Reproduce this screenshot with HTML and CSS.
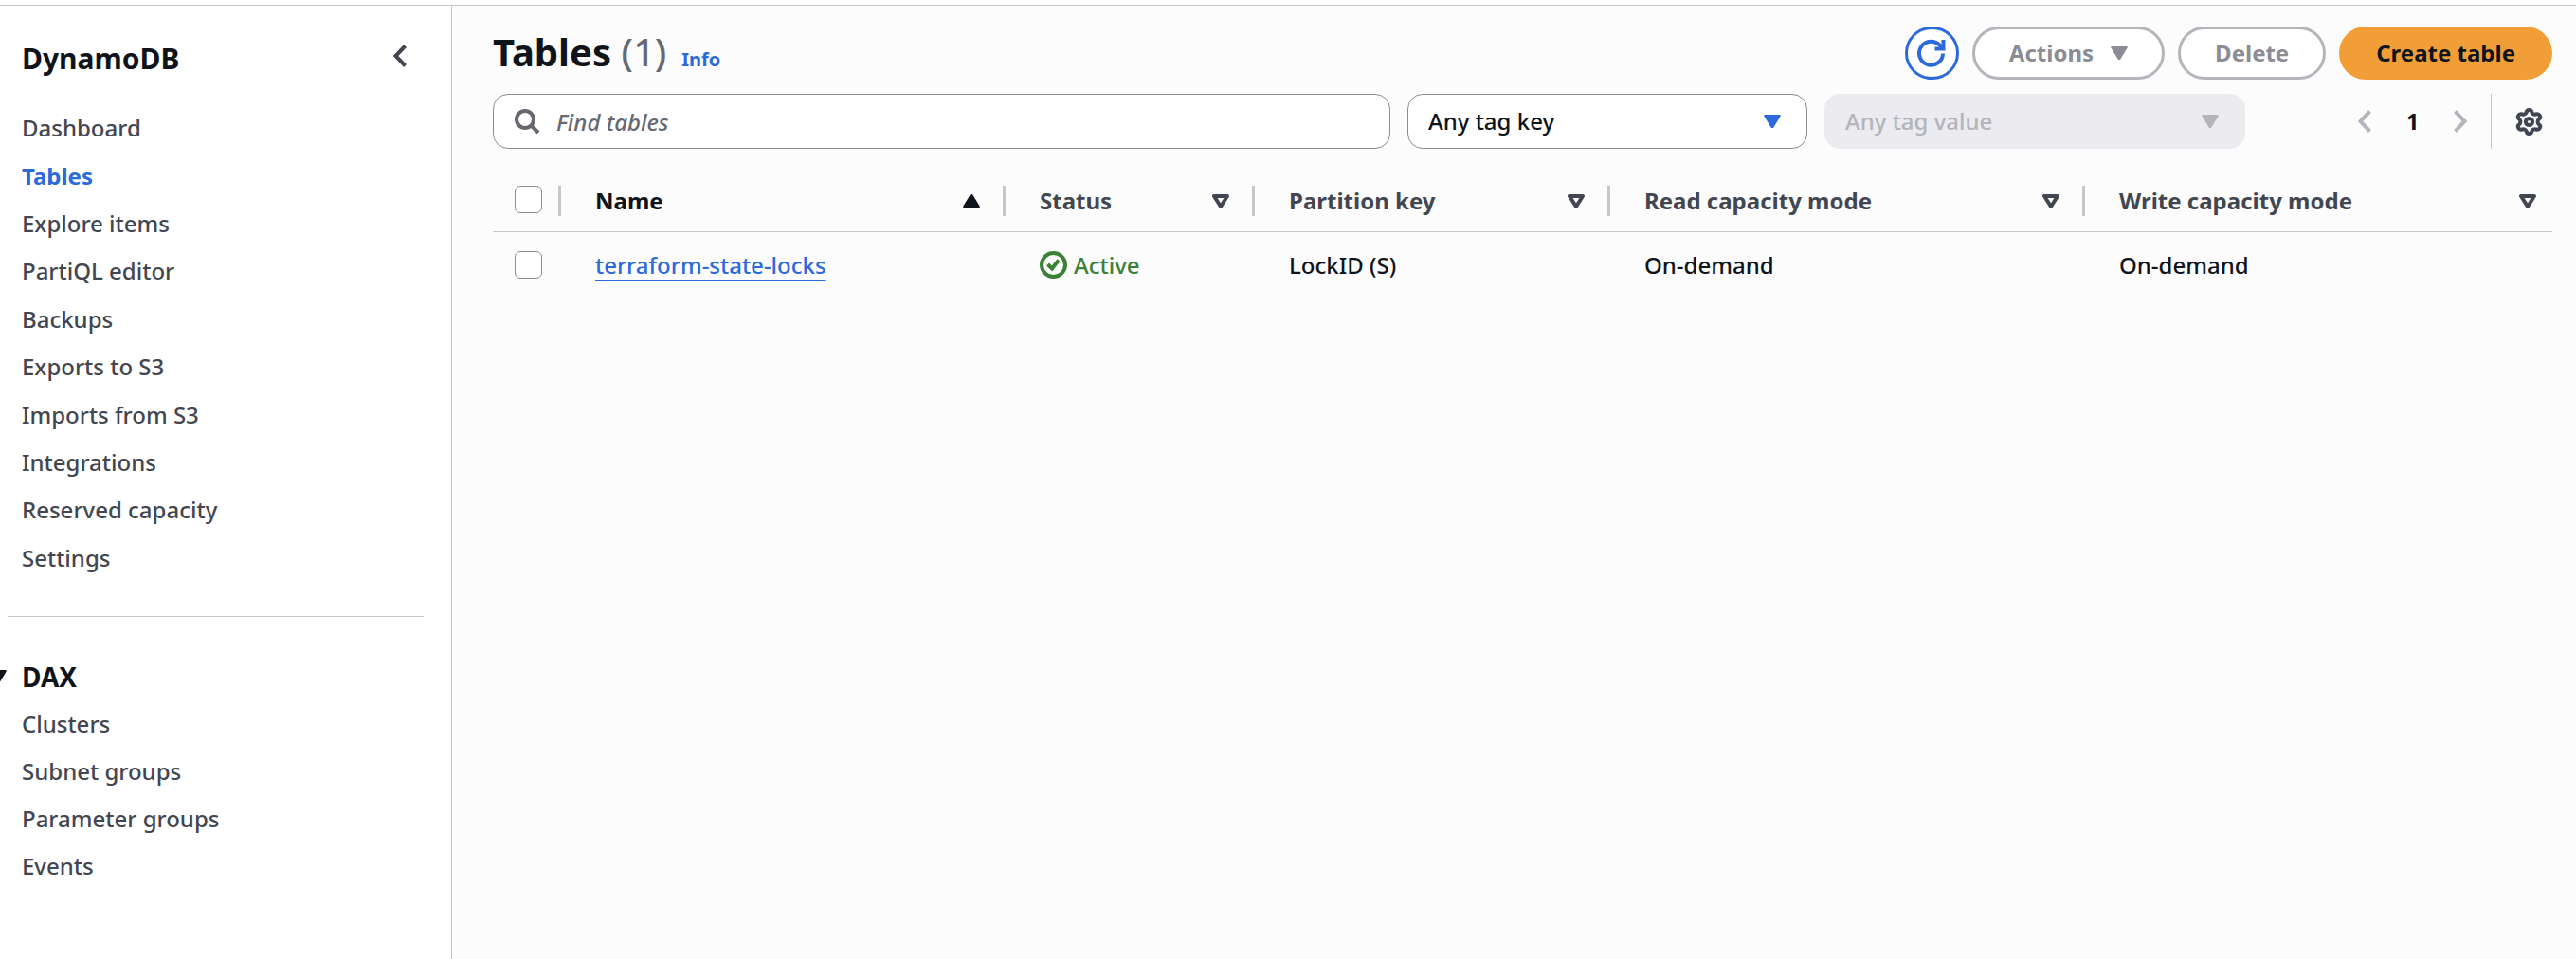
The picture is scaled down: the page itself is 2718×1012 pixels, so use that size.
FILE: index.html
```html
<!DOCTYPE html>
<html lang="en">
<head>
<meta charset="utf-8">
<title>Tables | DynamoDB</title>
<meta name="viewport" content="width=device-width, initial-scale=1">
<link rel="stylesheet" href="styles.css">
</head>
<body>
<div class="app">
  <aside class="sidebar">
    <header class="sidebar-header">
      <h2 class="service-name">DynamoDB</h2>
      <button class="icon-button" type="button" aria-label="Close navigation">
        <svg class="chevron" viewBox="0 0 14 24"><path d="M12.500 1.500 2.500 12l10 10.500"/></svg>
      </button>
    </header>
    <nav aria-label="DynamoDB">
      <ul class="nav-list nav-main">
        <li><a href="#">Dashboard</a></li>
        <li><a class="current" href="#" aria-current="page">Tables</a></li>
        <li><a href="#">Explore items</a></li>
        <li><a href="#">PartiQL editor</a></li>
        <li><a href="#">Backups</a></li>
        <li><a href="#">Exports to S3</a></li>
        <li><a href="#">Imports from S3</a></li>
        <li><a href="#">Integrations</a></li>
        <li><a href="#">Reserved capacity</a></li>
        <li><a href="#">Settings</a></li>
      </ul>
      <hr class="nav-divider">
      <button class="nav-section" type="button" aria-expanded="true">
        <svg class="triangle" viewBox="0 0 18 15"><path d="M1 0h16l1 1-8 13H8L0 1z"/></svg>
        <span>DAX</span>
      </button>
      <ul class="nav-list">
        <li><a href="#">Clusters</a></li>
        <li><a href="#">Subnet groups</a></li>
        <li><a href="#">Parameter groups</a></li>
        <li><a href="#">Events</a></li>
      </ul>
    </nav>
  </aside>

  <main class="content">
    <header class="page-header">
      <div class="page-title">
        <h1>Tables <span class="count">(1)</span></h1>
        <a class="info" href="#">Info</a>
      </div>
      <div class="actions">
        <button class="button refresh" type="button" aria-label="Refresh">
          <svg viewBox="0 0 30 30"><path d="M27 15.500a12.500 12.500 0 1 1-4.200-9.600L26.500 9.500"/><path d="M27.500 1v9.500H18.500"/></svg>
        </button>
        <button class="button" type="button" disabled>Actions
          <svg class="triangle" viewBox="0 0 18 15"><path d="M1 0h16l1 1-8 13H8L0 1z"/></svg>
        </button>
        <button class="button" type="button" disabled>Delete</button>
        <button class="button primary" type="button">Create table</button>
      </div>
    </header>

    <div class="toolbar">
      <div class="filters">
        <label class="field">
          <svg class="search-icon" viewBox="0 0 27 27"><circle cx="11" cy="11" r="9"/><path d="m17.500 17.500 7.500 7.500"/></svg>
          <input class="control search" type="search" placeholder="Find tables" aria-label="Find tables">
        </label>
        <label class="field">
          <select class="control" aria-label="Tag key"><option>Any tag key</option></select>
          <svg class="triangle select-arrow" viewBox="0 0 18 15"><path d="M1 0h16l1 1-8 13H8L0 1z"/></svg>
        </label>
        <label class="field">
          <select class="control" aria-label="Tag value" disabled><option>Any tag value</option></select>
          <svg class="triangle select-arrow" viewBox="0 0 18 15"><path d="M1 0h16l1 1-8 13H8L0 1z"/></svg>
        </label>
      </div>
      <div class="pagination">
        <button class="icon-button" type="button" aria-label="Previous page" disabled>
          <svg class="chevron" viewBox="0 0 14 24"><path d="M12.500 1.500 2.500 12l10 10.500"/></svg>
        </button>
        <button class="page-number" type="button" aria-current="page">1</button>
        <button class="icon-button" type="button" aria-label="Next page" disabled>
          <svg class="chevron" viewBox="0 0 14 24"><path d="m1.500 1.500 10 10.500-10 10.500"/></svg>
        </button>
      </div>
      <div class="preferences">
        <button class="icon-button" type="button" aria-label="Preferences">
          <svg class="gear" viewBox="0 0 28 29"><path d="M11 5Q11.300 2 14 2T17 5Q18.500 7.300 21 6.500 24 5.500 25.300 8T24 12Q22.300 14.500 24 17 26.600 18.500 25.300 21T21 22.500Q18.500 21.700 17 24 16.700 27 14 27T11 24Q9.500 21.700 7 22.500 4 23.500 2.700 21T4 17Q5.700 14.500 4 12 1.400 10.500 2.700 8T7 6.500Q9.500 7.300 11 5z"/><circle cx="14" cy="14.500" r="3.600"/></svg>
        </button>
      </div>
    </div>

    <table class="data">
      <colgroup>
        <col class="col-select"><col class="col-name"><col class="col-status"><col class="col-key"><col class="col-read"><col class="col-write">
      </colgroup>
      <thead>
        <tr>
          <th class="select-cell" scope="col"><div class="head"><input type="checkbox" aria-label="Select all tables"></div></th>
          <th class="sorted" scope="col" aria-sort="ascending"><div class="head">Name
            <svg class="triangle" viewBox="0 0 18 15"><path d="M8 0h2l8 13-1 2H1l-1-2z"/></svg></div></th>
          <th scope="col"><div class="head">Status
            <svg class="triangle outline" viewBox="0 0 18 15"><path d="M2 2h14L9 13z"/></svg></div></th>
          <th scope="col"><div class="head">Partition key
            <svg class="triangle outline" viewBox="0 0 18 15"><path d="M2 2h14L9 13z"/></svg></div></th>
          <th scope="col"><div class="head">Read capacity mode
            <svg class="triangle outline" viewBox="0 0 18 15"><path d="M2 2h14L9 13z"/></svg></div></th>
          <th scope="col"><div class="head">Write capacity mode
            <svg class="triangle outline" viewBox="0 0 18 15"><path d="M2 2h14L9 13z"/></svg></div></th>
        </tr>
      </thead>
      <tbody>
        <tr>
          <td class="select-cell"><input type="checkbox" aria-label="Select terraform-state-locks"></td>
          <td><a class="table-link" href="#">terraform-state-locks</a></td>
          <td><span class="status"><svg viewBox="0 0 29 29"><circle cx="14.500" cy="14.500" r="12.500"/><path d="m8.500 14 4.500 4.500L20 9.500"/></svg>Active</span></td>
          <td>LockID (S)</td>
          <td>On-demand</td>
          <td>On-demand</td>
        </tr>
      </tbody>
    </table>
  </main>
</div>
</body>
</html>
```
FILE: styles.css
```css
:root {
  --text: #0f141a;
  --text-secondary: #424650;
  --text-muted: #656871;
  --blue: #2b6adb;
  --orange: #f29e38;
  --green: #3a8035;
  --line: #c6c6cd;
  --input-border: #8c8c94;
  --disabled: #b4b4bb;
}

* { box-sizing: border-box; }

body {
  margin: 0;
  padding-top: 5px;
  background: #fff;
  color: var(--text);
  font: 500 24px/34px "Noto Sans", "Open Sans", sans-serif;
}

button, input, select { font: inherit; color: inherit; }

svg { display: block; flex: none; fill: none; stroke: currentColor; }

.app {
  display: grid;
  grid-template-columns: 477px 1fr;
  min-height: calc(100vh - 5px);
  border-top: 1px solid var(--line);
}

.sidebar {
  padding: 30px 29px 30px 8px;
  border-right: 1px solid var(--line);
  overflow: hidden;
}

.sidebar-header {
  display: flex;
  align-items: flex-start;
  justify-content: space-between;
  padding: 6px 18px 28px 15px;
}

.service-name { margin: 0; font-size: 30px; line-height: 40px; font-weight: 700; }

.icon-button {
  display: block;
  padding: 5px 0;
  border: 0;
  background: none;
  color: var(--text-secondary);
}

.icon-button:disabled { color: var(--disabled); }

.chevron { width: 14px; height: 24px; stroke-width: 4; }

.triangle { width: 18px; height: 15px; fill: currentColor; stroke: none; }
.triangle.outline { fill: none; stroke: currentColor; stroke-width: 4; stroke-linejoin: round; }

.nav-list { margin: 0; padding: 0 0 0 15px; list-style: none; }
.nav-list li { display: flex; align-items: center; min-height: 50px; }
.nav-list a { color: var(--text-secondary); text-decoration: none; }
.nav-list .current { color: var(--blue); font-weight: 700; }
.nav-main { display: grid; min-height: 504px; }

.nav-divider { margin: 36px 0 38px; border: 0; border-top: 1px solid var(--line); }

.nav-section {
  display: flex;
  align-items: center;
  gap: 16px;
  margin-left: -19px;
  padding: 8px 0;
  border: 0;
  background: none;
  font-size: 28px;
  font-weight: 700;
}

.content { padding: 20px 25px 20px 43px; background: #fcfcfd; min-width: 0; }

.page-header {
  display: flex;
  align-items: flex-start;
  justify-content: space-between;
  margin-bottom: 15px;
}

.page-title { display: flex; align-items: baseline; gap: 16px; }
.page-title h1 { margin: 0; font-size: 40px; line-height: 58px; font-weight: 700; }
.count { color: var(--text-muted); font-weight: 500; }
.info { color: var(--blue); font-size: 20px; font-weight: 700; text-decoration: none; }

.actions { display: flex; gap: 14px; padding-top: 2px; }

.button {
  display: flex;
  align-items: center;
  justify-content: center;
  gap: 18px;
  height: 56px;
  padding: 0 36px;
  border: 3px solid currentColor;
  border-radius: 28px;
  background: #fff;
  font-weight: 700;
}

.button:disabled { border-color: var(--disabled); color: var(--input-border); }
.button.primary { border-color: var(--orange); background: var(--orange); }
.button.refresh { width: 57px; padding: 0; color: var(--blue); }
.refresh svg { width: 30px; height: 30px; stroke-width: 4; }

.toolbar { display: flex; align-items: center; margin-bottom: 26px; }

.filters {
  flex: 1;
  display: grid;
  grid-template-columns: 947fr 422fr 444fr;
  gap: 18px;
}

.field { display: grid; align-items: center; }
.field > * { grid-area: 1 / 1; }
.field svg { z-index: 1; pointer-events: none; }

.control {
  width: 100%;
  height: 58px;
  padding: 0 21px;
  border: 1px solid var(--input-border);
  border-radius: 16px;
  background: #fff;
  appearance: none;
  outline-offset: 2px;
}

.control:disabled {
  border-color: #ebebf0;
  background: #ebebf0;
  color: var(--disabled);
  opacity: 1;
}

.control.search { padding-left: 66px; }
.search::placeholder { color: var(--text-muted); font-style: italic; opacity: 1; }

.search-icon { width: 27px; height: 27px; margin-left: 23px; stroke-width: 4; color: var(--text-muted); }
.select-arrow { justify-self: end; margin-right: 28px; color: var(--blue); }
.control:disabled + .select-arrow { color: var(--disabled); }

.pagination { display: flex; align-items: center; gap: 31px; margin: 0 25px 0 119px; }
.page-number { width: 25px; padding: 0; border: 0; background: none; font-weight: 700; }
.preferences { display: flex; align-items: center; height: 58px; padding: 0 10px 0 25px; border-left: 1px solid var(--line); }
.gear { width: 29px; height: 29px; stroke-width: 4; stroke-linejoin: round; }

.data { width: 100%; border-collapse: collapse; table-layout: fixed; }
.col-select { width: 72px; }
.col-name { width: 469px; }
.col-status { width: 263px; }
.col-key { width: 375px; }
.col-read { width: 501px; }
.col-write { width: 493px; }

.data th, .data td { padding: 0; text-align: left; }
.data th { padding: 13px 0 16px; border-bottom: 1px solid var(--line); color: var(--text-secondary); font-weight: 700; }
.data th.sorted { color: var(--text); }
.data td { height: 70px; padding-left: 36px; }

.head {
  display: flex;
  align-items: center;
  justify-content: space-between;
  height: 32px;
  padding: 0 24px 0 36px;
  border-right: 3px solid var(--line);
}

.data th:last-child .head { padding-right: 17px; border-right: 0; }
.select-cell .head { align-items: flex-start; padding: 0 0 0 23px; }
.data td.select-cell { padding-left: 23px; }

input[type="checkbox"] {
  display: block;
  width: 29px;
  height: 29px;
  margin: 0;
  border: 1px solid var(--input-border);
  border-radius: 6px;
  background: #fff;
  appearance: none;
}

input[type="checkbox"]:checked { background: var(--blue); }

.table-link {
  color: var(--blue);
  text-decoration: underline;
  text-decoration-thickness: 2px;
  text-underline-offset: 6px;
}

.status { display: flex; align-items: center; gap: 7px; color: var(--green); }
.status svg { width: 29px; height: 29px; stroke-width: 4; }
```
